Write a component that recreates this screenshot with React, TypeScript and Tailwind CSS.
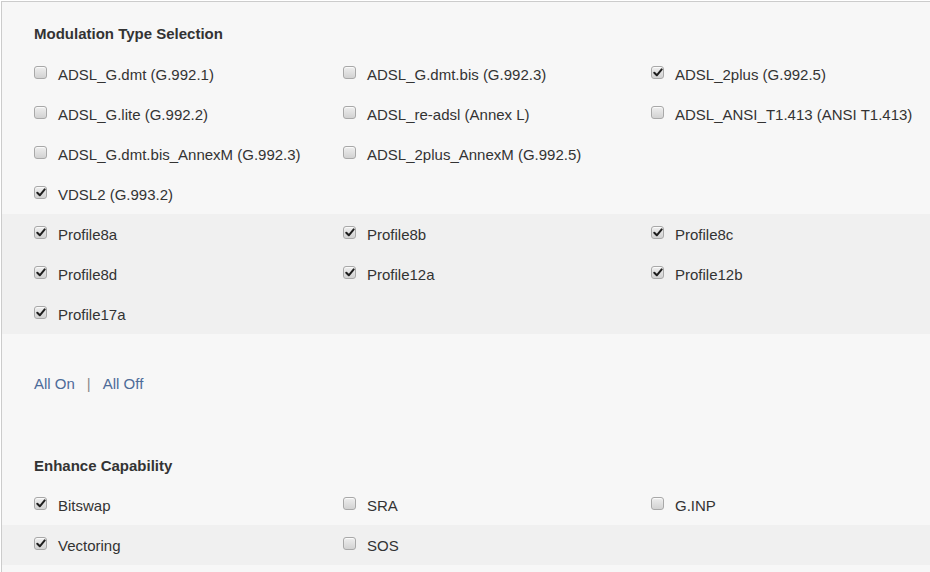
import React from "react";

type Item = { label: string; checked: boolean } | null;

function Box({ checked }: { checked: boolean }) {
  return (
    <span className="mb-[3px] ml-px mr-[11px] flex h-[13px] w-[13px] shrink-0 items-center justify-center rounded-[3px] border border-[#a8a8a8] bg-gradient-to-b from-[#eeeeee] to-[#d2d2d2] shadow-[inset_0_1px_1px_rgba(255,255,255,0.8)]">
      {checked && (
        <svg width="10" height="9" viewBox="0 0 10 9" className="-mt-px">
          <path d="M1.3 4.8 L3.8 7.3 L8.7 1.4" fill="none" stroke="#1e1e1e" strokeWidth="2" strokeLinecap="round" strokeLinejoin="round" />
        </svg>
      )}
    </span>
  );
}

function Row({ items, shaded }: { items: Item[]; shaded?: boolean }) {
  return (
    <div className={`grid h-10 grid-cols-[309px_308px_1fr] pl-[31px] ${shaded ? "bg-[#f0f0f0]" : ""}`}>
      {items.map((it, i) => (
        <div key={i} className="flex items-center">
          {it && (
            <>
              <Box checked={it.checked} />
              <span className="relative top-px whitespace-nowrap text-[15px] leading-5 text-[#333]">{it.label}</span>
            </>
          )}
        </div>
      ))}
    </div>
  );
}

const c = (label: string, checked = false): Item => ({ label, checked });

export default function App() {
  return (
    <div className="h-[572px] w-[930px] overflow-hidden bg-white pl-px pt-px" style={{ fontFamily: '"Liberation Sans", Arial, sans-serif' }}>
      <div className="h-full border-l border-t border-[#cccccc] bg-[#f7f7f7]">
        <div className="mb-[10px] pl-[32px] pt-[22px] text-[15px] font-bold leading-5 text-[#333]">Modulation Type Selection</div>
        <Row items={[c("ADSL_G.dmt (G.992.1)"), c("ADSL_G.dmt.bis (G.992.3)"), c("ADSL_2plus (G.992.5)", true)]} />
        <Row items={[c("ADSL_G.lite (G.992.2)"), c("ADSL_re-adsl (Annex L)"), c("ADSL_ANSI_T1.413 (ANSI T1.413)")]} />
        <Row items={[c("ADSL_G.dmt.bis_AnnexM (G.992.3)"), c("ADSL_2plus_AnnexM (G.992.5)"), null]} />
        <Row items={[c("VDSL2 (G.993.2)", true), null, null]} />
        <div className="bg-[#f0f0f0]">
          <Row items={[c("Profile8a", true), c("Profile8b", true), c("Profile8c", true)]} />
          <Row items={[c("Profile8d", true), c("Profile12a", true), c("Profile12b", true)]} />
          <Row items={[c("Profile17a", true), null, null]} />
        </div>
        <div className="mt-[40px] flex items-center pl-[32px] text-[15px] leading-5">
          <span className="text-[#4d6b99]">All On</span>
          <span className="mx-[12px] text-[#888]">|</span>
          <span className="text-[#4d6b99]">All Off</span>
        </div>
        <div className="mb-[9px] mt-[62px] pl-[32px] text-[15px] font-bold leading-5 text-[#333]">Enhance Capability</div>
        <Row items={[c("Bitswap", true), c("SRA"), c("G.INP")]} />
        <Row shaded items={[c("Vectoring", true), c("SOS"), null]} />
      </div>
    </div>
  );
}
